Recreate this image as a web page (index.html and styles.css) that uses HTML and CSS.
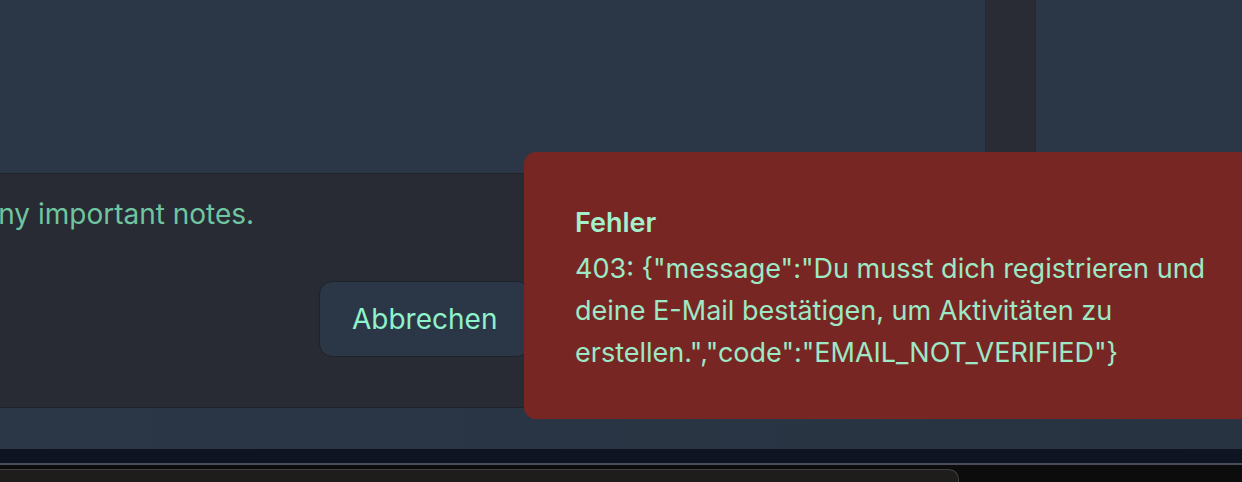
FILE: index.html
```html
<!DOCTYPE html>
<html lang="de">
<head>
<meta charset="utf-8">
<title>Aktivität erstellen</title>
<link rel="stylesheet" href="styles.css">
</head>
<body>
<div class="app">
  <div class="top">
    <div class="rail"></div>
  </div>
  <div class="sheet">
    <p class="note">Add any important notes.</p>
    <div class="actions">
      <button class="btn">Abbrechen</button>
      <button class="btn btn-primary">Speichern</button>
    </div>
  </div>
  <div class="gap"></div>
  <div class="dock"></div>
  <div class="divider"></div>
  <div class="taskbar"><div class="tab"></div></div>
</div>
<div class="toast" role="alert">
  <div class="toast-title">Fehler</div>
  <div class="toast-body">403: {"message":"Du musst dich registrieren und deine E-Mail bestätigen, um Aktivitäten zu erstellen.","code":"EMAIL_NOT_VERIFIED"}</div>
</div>
</body>
</html>
```
FILE: styles.css
```css
html, body {
  margin: 0;
  padding: 0;
}
body {
  width: 1242px;
  height: 482px;
  overflow: hidden;
  background: #2b3646;
  font-family: Inter, "Noto Sans", sans-serif;
  position: relative;
}
.app {
  display: flex;
  flex-direction: column;
  height: 482px;
}
.top {
  height: 174px;
  display: flex;
  justify-content: flex-end;
  padding-right: 206px;
  background: #2b3646;
}
.rail {
  width: 49px;
  background: #292c35;
  border-left: 1px solid #25282f;
  border-right: 1px solid #25282f;
}
.sheet {
  height: 234px;
  margin-left: -79px;
  width: 1055px;
  background: #282b33;
  border-top: 1px solid #212329;
  border-bottom: 1px solid #212329;
  display: flex;
  flex-direction: column;
}
.note {
  margin: 0;
  padding: 20px 0 0 0;
  font-size: 28px;
  line-height: 40px;
  color: #6fc5a0;
  white-space: nowrap;
}
.actions {
  display: flex;
  gap: 16px;
  margin-top: 47px;
  padding-left: 398px;
}
.btn {
  height: 76px;
  padding: 0 32px;
  font-family: Inter, "Noto Sans", sans-serif;
  font-size: 28px;
  color: #8ef2cb;
  background: #2b3646;
  border: 1px solid #1f2228;
  border-radius: 13px;
}
.btn-primary {
  background: #3aa57c;
  color: #10201a;
}
.gap {
  height: 41px;
  background: linear-gradient(90deg, #2b3646, #283342);
}
.dock {
  height: 14px;
  background: #0e1422;
}
.divider {
  height: 2px;
  background: #4b4e59;
}
.taskbar {
  flex: 1;
  background: #0c0c0c;
  padding-top: 4px;
}
.tab {
  width: 958px;
  height: 12px;
  background: #1e1d1b;
  border-top: 1px solid #414141;
  border-right: 1px solid #414141;
  border-top-right-radius: 10px;
}
.toast {
  position: absolute;
  left: 524px;
  top: 152px;
  width: 770px;
  height: 267px;
  box-sizing: border-box;
  padding: 51px 51px 0 51px;
  background: #772624;
  border-radius: 12px;
  color: #9de8c5;
}
.toast-title {
  font-size: 27px;
  font-weight: 600;
  line-height: 40px;
  color: #a2f0cc;
}
.toast-body {
  font-size: 27px;
  line-height: 42px;
  margin-top: 5px;
}
```
